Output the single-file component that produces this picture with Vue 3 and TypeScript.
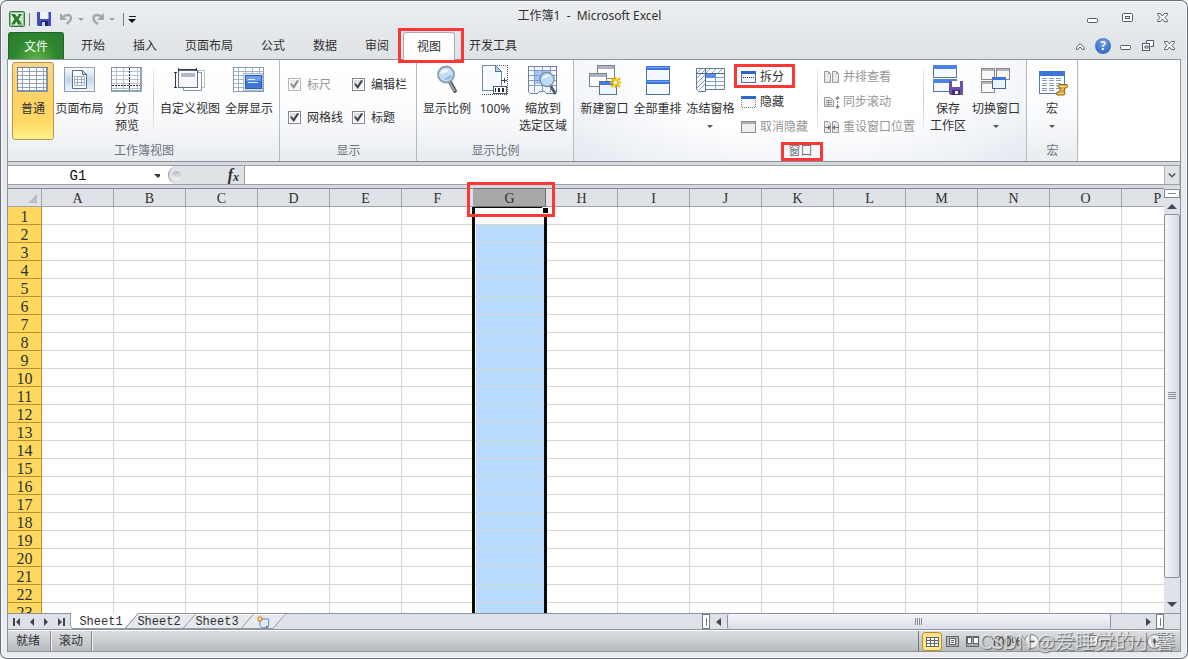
<script setup lang="ts">
import { ref } from 'vue'

const menus: string[] = ['开始', '插入', '页面布局', '公式', '数据', '审阅', '视图', '开发工具']
const activeMenu = ref('视图')

const columns: string[] = 'ABCDEFGHIJKLMNOP'.split('')
const rows: number[] = Array.from({ length: 23 }, (_, i) => i + 1)
const selectedColumn = ref('G')

const sheets: string[] = ['Sheet1', 'Sheet2', 'Sheet3']

interface Toggle {
  id: string
  label: string
  disabled: boolean
}
const toggles: Toggle[] = [
  { id: 'ruler', label: '标尺', disabled: true },
  { id: 'formula', label: '编辑栏', disabled: false },
  { id: 'gridlines', label: '网格线', disabled: false },
  { id: 'headings', label: '标题', disabled: false },
]

const cellName = ref('G1')
const formula = ref('')
const zoom = ref(50)
</script>

<template>
  <div class="window">
    <header class="titlebar">
      <div class="quick">
        <svg class="ic16" viewBox="0 0 16 16">
          <rect x=".5" y=".5" width="15" height="15" rx="1" fill="#fff" stroke="#2f7d3b" />
          <rect x="1.5" y="1.5" width="13" height="13" fill="#e2f1de" stroke="#8fc08f" />
          <path d="M10 4h4M10 7h4M10 10h4M10 13h4" stroke="#9fc79f" />
          <path d="M2 3h4l2 3 2-3h3L9.500 8 13 13.500H9L7.500 10.500 5.500 13.500H2L5.500 8z" fill="#2a7a31" />
        </svg>
        <i class="bar"></i>
        <button aria-label="保存" class="save">
          <svg class="ic14" viewBox="0 0 14 14">
            <path d="M0 0h14v14H1L0 13z" fill="#3f4bc0" />
            <path d="M3 0h8v7H3z" fill="#eef4ff" />
            <path d="M11 0h1v7h-1z" fill="#8e98e6" />
            <path d="M4 9h7v5H4z" fill="#1d2768" />
            <path d="M5 10h3v4H5z" fill="#cdd6ef" />
          </svg>
        </button>
        <button aria-label="撤消" class="undo">
          <svg class="ic14" viewBox="0 0 14 14">
            <path d="M3 5.500C5 2.500 11 1.500 11 6c0 3-2 4-4.500 6" fill="none" stroke="#a4a8ad" stroke-width="2.400" />
            <path d="M0 1v7h7z" fill="#a4a8ad" />
          </svg>
        </button>
        <span class="tri grey"></span>
        <button aria-label="恢复" class="redo">
          <svg class="ic14" viewBox="0 0 14 14">
            <path d="M11 6C9 2 2.500 2 2.500 6.500c0 3 2 4 4.500 5.500" fill="none" stroke="#a4a8ad" stroke-width="2.400" />
            <path d="M13 1v7H6z" fill="#a4a8ad" />
          </svg>
        </button>
        <span class="tri grey"></span>
        <i class="bar last"></i>
        <button aria-label="自定义快速访问工具栏" class="more"><i></i><span class="tri"></span></button>
      </div>
      <h1>工作簿1 &nbsp;- &nbsp;Microsoft Excel</h1>
      <div class="winbtns">
        <button aria-label="最小化">
          <svg class="ic14" viewBox="0 0 14 14"><rect x="1.500" y="7.500" width="10" height="4" rx="1" fill="#fff" stroke="#55596a" /></svg>
        </button>
        <button aria-label="最大化">
          <svg class="ic14" viewBox="0 0 14 14"><rect x="1.500" y="2.500" width="10" height="8" rx="1" fill="#fff" stroke="#55596a" /><rect x="4.500" y="5.500" width="4" height="2" fill="#fff" stroke="#55596a" /></svg>
        </button>
        <button aria-label="关闭">
          <svg class="ic14" viewBox="0 0 14 14"><path d="M1.500 2.500h3l2 2.500 2-2.500h3v1L9 6.500l2.500 3v1h-3l-2-2.500-2 2.500h-3v-1L4 6.500l-2.500-3z" fill="#fff" stroke="#55596a" /></svg>
        </button>
      </div>
    </header>

    <nav class="tabs">
      <button class="file">文件</button>
      <button
        v-for="m in menus"
        :key="m"
        class="tab"
        :class="{ active: m === activeMenu }"
        @click="activeMenu = m"
      >
        {{ m }}
        <span v-if="m === '视图'" class="mark mark-tab"></span>
      </button>
      <div class="docbtns">
        <button aria-label="折叠功能区">
          <svg class="ic14" viewBox="0 0 14 14"><path d="M3.500 8.500L7 4.500l4 4v2H9.500L7 8l-2 2.500H3.500z" fill="#fff" stroke="#55596a" /></svg>
        </button>
        <button aria-label="帮助" class="help">?</button>
        <button aria-label="最小化工作簿">
          <svg class="ic14" viewBox="0 0 14 14"><rect x="1.500" y="6.500" width="10" height="4" rx="1" fill="#fff" stroke="#55596a" /></svg>
        </button>
        <button aria-label="还原工作簿">
          <svg class="ic14" viewBox="0 0 14 14"><path d="M5.500 4.500v-3h7v6h-3" fill="#fff" stroke="#55596a" /><rect x="1.500" y="4.500" width="7" height="7" fill="#fff" stroke="#55596a" /><rect x="4" y="7" width="3" height="2" fill="none" stroke="#55596a" /></svg>
        </button>
        <button aria-label="关闭工作簿">
          <svg class="ic14" viewBox="0 0 14 14"><path d="M1.500 2.500h3l2 2.500 2-2.500h3v1L9 6.500l2.500 3v1h-3l-2-2.500-2 2.500h-3v-1L4 6.500l-2.500-3z" fill="#fff" stroke="#55596a" /></svg>
        </button>
      </div>
    </nav>

    <main class="client">
      <div class="ribbon">
        <section class="group g-views">
          <div class="tools">
            <button class="big w42 pressed">
              <svg class="ic32" viewBox="0 0 32 32" shape-rendering="crispEdges">
                <rect x=".5" y="3.500" width="30" height="24" fill="#fff" stroke="#6c83a0" />
                <path d="M1 7.500h30M1 11.500h30M1 15.500h30M1 19.500h30M1 23.500h30M5.500 4v23M12.500 4v23M19.500 4v23M26.500 4v23" stroke="#8ea2ba" />
                <path d="M30 4v24M1 27h30" stroke="#7f93ae" stroke-width="2" />
              </svg>
              <span>普通</span>
            </button>
            <button class="big w51">
              <svg class="ic32" viewBox="0 0 32 32">
                <defs><linearGradient id="pg" x2="0" y2="1"><stop stop-color="#fdfeff" /><stop offset=".5" stop-color="#c3d6ea" /><stop offset="1" stop-color="#f3f8fd" /></linearGradient></defs>
                <rect x=".5" y="3.500" width="30" height="24" fill="url(#pg)" stroke="#94a0af" />
                <path d="M8.500 6.500h10l4 4v14h-14z" fill="#fff" stroke="#566f8c" />
                <path d="M18.500 6.500v4h4z" fill="#c5d6e8" stroke="#566f8c" />
                <path d="M10.500 12.500h10v9h-10zM10.500 15.500h10M10.500 18.500h10M13.500 12.500v9M17.500 12.500v9" fill="none" stroke="#9aafc4" />
              </svg>
              <span>页面布局</span>
            </button>
            <button class="big w44">
              <svg class="ic32" viewBox="0 0 32 32" shape-rendering="crispEdges">
                <rect x=".5" y="3.500" width="30" height="24" fill="#fff" stroke="#7f91a8" />
                <path d="M1 7.500h30M1 11.500h30M1 15.500h30M1 19.500h30M1 24.500h30M5.500 4v23M12.500 4v23M26.500 4v23" stroke="#b5c2cf" />
                <path d="M18.500 4v23M1 21.500h30" stroke="#26323f" stroke-width="1" stroke-dasharray="2 1" />
                <path d="M30 4v24M1 27h30" stroke="#93a3b7" stroke-width="2" />
              </svg>
              <span>分页<br />预览</span>
            </button>
            <i class="sep"></i>
            <button class="big w66">
              <svg class="ic32" viewBox="0 0 32 32" shape-rendering="crispEdges">
                <path d="M24.500 6.500h6v17h-6z" fill="#fff" stroke="#b9c0c8" />
                <path d="M9.500 8.500h18v18h-18z" fill="#fff" stroke="#8b99a8" />
                <rect x="4.500" y="6.500" width="19" height="17" fill="#f4f7fb" stroke="#5d6f84" />
                <rect x="7" y="9" width="14" height="4" fill="#b3b9c1" />
                <path d="M4 5.500h19M4.500 4v3M22.500 4v3M1.500 8v15M0 8.500h3M0 23.500h3" stroke="#2c3b4d" fill="none" />
              </svg>
              <span>自定义视图</span>
            </button>
            <button class="big w52">
              <svg class="ic32" viewBox="0 0 32 32" shape-rendering="crispEdges">
                <rect x=".5" y="3.500" width="30" height="24" fill="#fff" stroke="#8799ae" />
                <path d="M1 7.500h30M1 11.500h30M1 15.500h30M1 19.500h30M1 23.500h30M5.500 4v23M12.500 4v23M19.500 4v23M26.500 4v23" stroke="#a3b2c4" />
                <rect x="10.500" y="9.500" width="19" height="17" fill="#dce8fa" stroke="#a6bcd8" />
                <rect x="12.500" y="11.500" width="16" height="13" fill="#3f77d9" stroke="#2b5bb5" />
                <path d="M13 12h15v5H13z" fill="#6b9bee" />
                <path d="M15 15.500h7M15 18.500h10" stroke="#e9f1ff" />
              </svg>
              <span>全屏显示</span>
            </button>
          </div>
          <h2>工作簿视图</h2>
        </section>

        <section class="group g-show">
          <div class="tools checks">
            <label v-for="t in toggles" :key="t.id" :for="t.id" :class="{ off: t.disabled }">
              <input :id="t.id" type="checkbox" checked :disabled="t.disabled" />{{ t.label }}
            </label>
          </div>
          <h2>显示</h2>
        </section>

        <section class="group g-zoom">
          <div class="tools">
            <button class="big w56">
              <svg class="ic32" viewBox="0 0 32 32">
                <path d="M19 18l5 9" stroke="#5c6169" stroke-width="4" stroke-linecap="round" />
                <path d="M18.500 18l5 9" stroke="#b1b6bd" stroke-width="1.500" />
                <circle cx="15" cy="10.500" r="8" fill="#c6dcf4" stroke="#8b9bad" stroke-width="1.800" />
                <path d="M9 10c1-4 4-5.500 9-4.500-2 4-5 3-9 4.500z" fill="#fff" opacity=".8" />
                <path d="M12 15c4 0 5-4 9-4-1 4-4 6-9 4z" fill="#8fb8ea" />
              </svg>
              <span>显示比例</span>
            </button>
            <button class="big w40">
              <svg class="ic32" viewBox="0 0 32 32" shape-rendering="crispEdges">
                <path d="M3.500 1.500h13l6 6v19h-19z" fill="#f7fbff" stroke="#6d8bad" />
                <path d="M16.500 1.500v6h6z" fill="#b7cfec" stroke="#5379a8" />
                <path d="M18 1.500h10.500v29H3" fill="none" stroke="#4c5663" stroke-dasharray="1 1" />
                <path d="M22 16.500h6M25.500 14v5" stroke="#35485e" />
                <rect x="14.500" y="22.500" width="13" height="7" fill="#fff" stroke="#4c5a6b" />
                <path d="M16.500 24v4M19.500 24.500h1v3h-1zM23.500 24.500h1v3h-1z" fill="none" stroke="#1f2b39" />
              </svg>
              <span>100%</span>
            </button>
            <button class="big w56">
              <svg class="ic32" viewBox="0 0 32 32">
                <g shape-rendering="crispEdges">
                  <path d="M1.500 2.500h28v25l-4 2h-6l-2-2h-5l-2 2h-7l-2-2z" fill="#f5f9ff" stroke="#6b82a0" />
                  <path d="M8 6h15v14H8z" fill="#a3c3fb" />
                  <path d="M2 6.500h27M2 11.500h27M2 16.500h27M2 21.500h27M7.500 3v25M15.500 3v25M23.500 3v25" stroke="#829cc0" />
                </g>
                <path d="M23 21l5 8" stroke="#5c6169" stroke-width="3" stroke-linecap="round" />
                <circle cx="20" cy="15.500" r="7" fill="#bfdbfa" stroke="#8292a6" stroke-width="1.500" />
                <path d="M15 15c1-3 4-5 8-4-2 3-5 2-8 4z" fill="#fff" opacity=".8" />
              </svg>
              <span>缩放到<br />选定区域</span>
            </button>
          </div>
          <h2>显示比例</h2>
        </section>

        <section class="group g-window">
          <div class="tools">
            <button class="big w53">
              <svg class="ic32" viewBox="0 0 32 32">
                <rect x="8.500" y="1.500" width="17" height="13" fill="#fff" stroke="#7c8592" />
                <rect x="9" y="2" width="16" height="3" fill="#a9b3c3" />
                <rect x=".5" y="9.500" width="17" height="13" fill="#fff" stroke="#7c8592" />
                <rect x="1" y="10" width="16" height="3" fill="#a9b3c3" />
                <rect x="10.500" y="17.500" width="17" height="13" fill="#eef4fd" stroke="#5b7191" />
                <rect x="11" y="18" width="16" height="3" fill="#3f7ae8" />
                <path d="M26.500 13v11M21 18.500h11M22 14l9 9M31 14l-9 9" stroke="#e9b800" stroke-width="2" />
                <circle cx="26.500" cy="18.500" r="2" fill="#fffbd0" />
              </svg>
              <span>新建窗口</span>
            </button>
            <button class="big w53">
              <svg class="ic32" viewBox="0 0 32 32" shape-rendering="crispEdges">
                <rect x="4.500" y="2.500" width="23" height="14" fill="#f4f9ff" stroke="#4d6f9e" />
                <rect x="4" y="2" width="24" height="4" fill="#3c74dd" />
                <rect x="4.500" y="16.500" width="23" height="14" fill="#f4f9ff" stroke="#4d6f9e" />
                <rect x="4" y="16" width="24" height="4" fill="#3c74dd" />
                <path d="M5 3.500h22M5 17.500h22" stroke="#79a5f5" />
              </svg>
              <span>全部重排</span>
            </button>
            <button class="big w53">
              <svg class="ic32" viewBox="0 0 32 32">
                <path d="M1.500 4.500h28v21h-19v2h-7l-2-2z" fill="#f8fbff" stroke="#657b96" />
                <path d="M2 9l4-4M2 14l9-9M2 19l8-8M2 24l8-8M4 26l6-6M11 9l4-4M17 9l4-4M23 9l4-4" stroke="#8ca3c2" />
                <path d="M1 9.500h29M10.500 4v22" stroke="#526a89" />
                <path d="M11 13.500h19M11 17.500h19M11 21.500h19M20.500 10v15" stroke="#8da1b9" />
                <rect x="11" y="10" width="10" height="4" fill="#5b8cec" />
              </svg>
              <span>冻结窗格<br /><i class="tri small"></i></span>
            </button>
            <div class="stack s1">
              <button>
                <svg class="ic16" viewBox="0 0 16 16" shape-rendering="crispEdges"><rect x=".5" y="2.500" width="14" height="11" fill="#f4f8fd" stroke="#55749c" /><rect x="0" y="2" width="15" height="3" fill="#2f66cc" /><path d="M2 8.500h12" stroke="#1d2a3a" stroke-dasharray="1 1" /></svg>
                拆分<span class="mark mark-split"></span>
              </button>
              <button>
                <svg class="ic16" viewBox="0 0 16 16" shape-rendering="crispEdges"><path d="M.5 4v9.500h14V4" fill="#f9fafc" stroke="#67788c" stroke-dasharray="1 1" /><rect x="0" y="2" width="15" height="3" fill="#2f66cc" /></svg>
                隐藏
              </button>
              <button class="off">
                <svg class="ic16" viewBox="0 0 16 16" shape-rendering="crispEdges"><rect x=".5" y="2.500" width="14" height="11" fill="#f1f1f3" stroke="#8b8b8f" /><rect x="1" y="3" width="13" height="2" fill="#b0b0b4" /></svg>
                取消隐藏
              </button>
            </div>
            <i class="sep"></i>
            <div class="stack s2">
              <button class="off">
                <svg class="ic16" viewBox="0 0 16 16"><path d="M.5 2.500h4l2 2v9h-6zM8.500 2.500h4l2 2v9h-6z" fill="#e8e8ea" stroke="#9a9a9e" /><path d="M4.500 2.500v2h2M12.500 2.500v2h2" fill="none" stroke="#9a9a9e" /></svg>
                并排查看
              </button>
              <button class="off">
                <svg class="ic16" viewBox="0 0 16 16"><path d="M.5 3.500h6l3 3v6h-9z" fill="#e8e8ea" stroke="#9a9a9e" /><path d="M2 6.500h6M2 8.500h6M2 10.500h6M4.500 6v6" stroke="#9a9a9e" /><path d="M13.500 4v9" stroke="#88888c" stroke-dasharray="2 1" /><path d="M11 5l2.500-3L16 5zM11 12l2.500 3 2.500-3z" fill="#88888c" /></svg>
                同步滚动
              </button>
              <button class="off">
                <svg class="ic16" viewBox="0 0 16 16"><path d="M.5 2.500h4l2 2v9h-6zM8.500 2.500h4l2 2v9h-6z" fill="#e8e8ea" stroke="#9a9a9e" /><path d="M1 8.500h4M10 8.500h5" stroke="#77777b" /><path d="M4 6l3 2.500L4 11zM11 6L8 8.500 11 11z" fill="#77777b" /></svg>
                重设窗口位置
              </button>
            </div>
            <i class="sep tight"></i>
            <button class="big w48">
              <svg class="ic32" viewBox="0 0 32 32" shape-rendering="crispEdges">
                <rect x="1.500" y="1.500" width="23" height="12" fill="#f4f9ff" stroke="#5d7596" />
                <rect x="1" y="1" width="24" height="4" fill="#4b83ea" />
                <rect x="1.500" y="15.500" width="23" height="12" fill="#f4f9ff" stroke="#5d7596" />
                <rect x="1" y="15" width="24" height="4" fill="#4b83ea" />
                <path d="M17 17h14v14H18l-1-1z" fill="#6c50a8" />
                <path d="M20 17h8v6h-8z" fill="#fff" /><path d="M20 26h8v5h-8z" fill="#44307a" /><path d="M23 27h3v3h-3z" fill="#fff" />
              </svg>
              <span>保存<br />工作区</span>
            </button>
            <button class="big w48">
              <svg class="ic32" viewBox="0 0 32 32" shape-rendering="crispEdges">
                <path d="M1.500 4.500h13v11h-13zM16.500 4.500h13v11h-13zM1.500 17.500h13v11h-13z" fill="#f7f7f8" stroke="#86888c" />
                <path d="M2 6h12M17 6h12M2 19h12" stroke="#b4b6ba" stroke-width="2" />
                <rect x="12.500" y="13.500" width="13" height="11" fill="#eaf3ff" stroke="#486792" />
                <path d="M12 14.500h14" stroke="#3d75de" stroke-width="3" />
              </svg>
              <span>切换窗口<br /><i class="tri small"></i></span>
            </button>
          </div>
          <h2>窗口<span class="mark mark-win"></span></h2>
        </section>

        <section class="group g-macro">
          <div class="tools">
            <button class="big w48">
              <svg class="ic32" viewBox="0 0 32 32">
                <rect x="3.500" y="7.500" width="25" height="22" fill="#fff" stroke="#5c7ba8" />
                <rect x="3" y="7" width="26" height="5" fill="#3c74dd" />
                <path d="M6 14.500h20M6 16.500h20M6 19.500h20M6 21.500h20M6 24.500h20M6 26.500h14" stroke="#869cb9" stroke-dasharray="5 2" />
                <path d="M22 22.500c0-1.500 1-2 2-2h7c1.500 2 0 3.500-2 3.500l-1 4c2 1 1 3-.500 3H21c-1.500-1.500-.500-3 1-3h1.500l1-4z" fill="#e0b040" stroke="#8a661a" />
                <path d="M24 22.500h5M23 29.500h4" stroke="#f7dd83" />
              </svg>
              <span>宏<br /><i class="tri small"></i></span>
            </button>
          </div>
          <h2>宏</h2>
        </section>
      </div>

      <div class="formulabar">
        <input v-model="cellName" class="name" aria-label="名称框" />
        <button class="drop" aria-label="名称列表"><span class="tri"></span></button>
        <div class="fx"><i class="knob"></i><button aria-label="插入函数">f<sub>x</sub></button></div>
        <input v-model="formula" class="formula" aria-label="编辑栏" />
        <button class="expand" aria-label="展开编辑栏">
          <svg viewBox="0 0 10 8"><path d="M1 1.500l4 4 4-4" fill="none" stroke="#4d5258" stroke-width="2" /></svg>
        </button>
      </div>

      <div class="work">
        <div class="sheet">
          <table>
            <colgroup><col class="c0" /><col v-for="c in columns" :key="c" class="cn" /></colgroup>
            <thead>
              <tr>
                <th class="corner"><svg viewBox="0 0 9 9"><path d="M9 0v9H0z" fill="#b9bec4" /></svg></th>
                <th v-for="c in columns" :key="c" :class="{ picked: c === selectedColumn }" @click="selectedColumn = c">{{ c }}</th>
              </tr>
            </thead>
            <tbody>
              <tr v-for="r in rows" :key="r">
                <th>{{ r }}</th>
                <td v-for="c in columns" :key="c" :class="{ fill: c === selectedColumn && r > 1 }"></td>
              </tr>
            </tbody>
          </table>
          <div class="selection"><i></i></div>
          <span class="mark mark-col"></span>
        </div>
        <div class="vscroll">
          <i class="vsplit"></i>
          <button aria-label="向上滚动"><span class="tri up"></span></button>
          <div class="vthumb"><i></i></div>
          <button aria-label="向下滚动" class="down"><span class="tri"></span></button>
        </div>
      </div>

      <div class="bottom">
        <div class="sheets">
          <div class="navs">
            <button aria-label="第一张"><svg viewBox="0 0 8 8"><path d="M0 0h2v8H0zM7 0v8L3 4z" /></svg></button>
            <button aria-label="上一张"><svg viewBox="0 0 8 8"><path d="M6 0v8L2 4z" /></svg></button>
            <button aria-label="下一张"><svg viewBox="0 0 8 8"><path d="M2 0v8l4-4z" /></svg></button>
            <button aria-label="最后一张"><svg viewBox="0 0 8 8"><path d="M6 0h2v8H6zM1 0v8l4-4z" /></svg></button>
          </div>
          <svg class="tabshape" viewBox="0 0 224 17">
            <path d="M55 15.500L67.500 1.500H125L113 15.500zM113 15.500L125.500 1.500H183L171 15.500zM171 15.500L183.500 1.500H216L204 15.500z" fill="#e6e9ee" />
            <path d="M67 1.500h149" stroke="#fff" />
            <path d="M.5 0v13l2 2.500H203L216 .5M55 15.500L68 .5M113 15.500L126 .5M171 15.500L184 .5" fill="none" stroke="#8f99a3" />
            <path d="M1 0v13l2 2h52L68 0z" fill="#fff" />
            <path d="M55 15.500L68 .5" stroke="#8f99a3" />
          </svg>
          <button v-for="s in sheets" :key="s" class="sheettab">{{ s }}</button>
          <button class="newsheet" aria-label="插入工作表">
            <svg class="ic16" viewBox="0 0 16 16"><path d="M4.500 4.500h10v9l-2 1h-6l-2-2z" fill="#dfe9f8" stroke="#5d7faf" /><path d="M14 13l-3 1.500 1-2.500z" fill="#2f5da4" /><path d="M4.500 1v7M1 4.500h7M2 2l5 5M7 2L2 7" stroke="#d88a14" stroke-width="1.200" /><circle cx="4.500" cy="4.500" r="1.300" fill="#fff4b8" /></svg>
          </button>
        </div>
        <div class="hscroll">
          <i class="hsplit"></i>
          <button aria-label="向左滚动"><svg viewBox="0 0 8 8"><path d="M6 0v8L1 4z" /></svg></button>
          <div class="htrack"><div class="hthumb"><i></i></div></div>
          <button aria-label="向右滚动"><svg viewBox="0 0 8 8"><path d="M2 0v8l5-4z" /></svg></button>
          <i class="hsplit end"></i>
        </div>
      </div>

      <footer class="status">
        <span class="cell">就绪</span><span class="cell">滚动</span>
        <div class="right">
          <button class="view on" aria-label="普通视图"><svg viewBox="0 0 13 10" shape-rendering="crispEdges"><path d="M.5.5h12v9H.5zM0 3.500h13M0 6.500h13M4.500 0v10M8.500 0v10" fill="#fff" stroke="#62666b" /></svg></button>
          <button class="view" aria-label="页面布局视图"><svg viewBox="0 0 13 11" shape-rendering="crispEdges"><path d="M.5.5h12v10H.5z" fill="#b4b8bc" stroke="#62666b" /><path d="M3.500 2.500h6v6h-6z" fill="#fff" stroke="#62666b" /><path d="M5 4.500h3M5 6.500h3" stroke="#62666b" /></svg></button>
          <button class="view" aria-label="分页预览视图"><svg viewBox="0 0 13 11" shape-rendering="crispEdges"><path d="M.5.5h12v10H.5z" fill="#a8acb0" stroke="#62666b" /><path d="M1 1h4v6H1zM7 1h5v6H7z" fill="#fff" stroke="#62666b" /></svg></button>
          <button class="pct">100%</button>
          <button class="round" aria-label="缩小"><svg viewBox="0 0 15 15"><path d="M4 7.500h7" stroke="#4a4e53" stroke-width="2" /></svg></button>
          <input v-model="zoom" type="range" min="0" max="100" aria-label="显示比例" />
          <button class="round" aria-label="放大"><svg viewBox="0 0 15 15"><path d="M4 7.500h7M7.500 4v7" stroke="#4a4e53" stroke-width="2" /></svg></button>
        </div>
        <span class="credit">CSDN @爱睡觉的小馨</span>
      </footer>
    </main>
  </div>
</template>

<style>
body {
  background: #fff;
}
</style>

<style scoped>
.window,
.window * {
  box-sizing: border-box;
}
.window {
  height: 100vh;
  display: flex;
  flex-direction: column;
  padding-bottom: 7px;
  overflow: hidden;
  border-radius: 7px;
  background: linear-gradient(#eceef0 0, #dfe3e6 59px, #e8eaee 60px, #e9ebef 100%);
  box-shadow: inset 0 0 0 1px #686f7a, inset 0 0 0 2px #f8f9fa;
  font: 12px/17px "Noto Sans", "Noto Sans CJK SC", sans-serif;
  color: #303030;
}
button {
  font: inherit;
  color: inherit;
  border: 0;
  padding: 0;
  margin: 0;
  background: none;
}
svg {
  display: block;
  overflow: visible;
  flex: none;
}
.ic14 { width: 14px; height: 14px; }
.ic16 { width: 16px; height: 16px; }
.ic32 { width: 32px; height: 32px; }
.tri {
  display: inline-block;
  width: 0;
  height: 0;
  border: 4px solid transparent;
  border-top-color: #35383d;
  border-bottom-width: 0;
}
.tri.grey { border-width: 3px; border-bottom-width: 0; border-top-color: #9ea2a7; }
.tri.small { border-width: 3px; border-bottom-width: 0; border-top-color: #555; vertical-align: middle; }
.tri.up { border-width: 0 5px 5px; border-color: transparent transparent #454a50; }

.titlebar {
  display: grid;
  grid-template-columns: 1fr auto 1fr;
  height: 32px;
  flex: none;
  padding: 2px 18px 0 9px;
}
.titlebar h1 {
  margin: 0;
  font-size: 12px;
  font-weight: 400;
  line-height: 28px;
  white-space: nowrap;
}
.quick { display: flex; align-items: center; padding-top: 4px; }
.quick .bar { width: 1px; height: 13px; background: #777b82; margin: 0 7px 0 4px; }
.quick .save { margin-right: 9px; }
.quick .undo, .quick .redo { margin-right: 4px; }
.quick .redo { margin-left: 7px; }
.quick .bar.last { margin: 0 4px 0 8px; }
.more { display: flex; flex-direction: column; align-items: center; gap: 2px; }
.more i { width: 7px; height: 1px; background: #222; }
.more .tri { border-top-color: #111; }
.winbtns { display: flex; justify-content: flex-end; align-items: flex-start; gap: 21px; padding-top: 9px; }

.tabs { display: flex; height: 27px; flex: none; padding: 0 11px 0 8px; }
.file {
  width: 56px;
  color: #fff;
  border: 1px solid #1c682a;
  border-bottom: 0;
  border-radius: 3px 3px 0 0;
  background: radial-gradient(ellipse at 50% 110%, #62bb45 0, #2f8730 55%, #277a2b 100%);
}
.tab { position: relative; padding: 0 14px; }
.file + .tab { margin-left: 3px; }
.tab.active {
  height: 28px;
  padding: 0 13px 1px;
  border: 1px solid #a5aeb6;
  border-bottom: 0;
  border-radius: 3px 3px 0 0;
  background: #fff;
  z-index: 1;
}
.docbtns { display: flex; align-items: center; gap: 8px; margin-left: auto; }
.docbtns .help {
  width: 16px;
  height: 16px;
  border-radius: 50%;
  background: radial-gradient(circle at 50% 30%, #6b9ce4, #2d5db5);
  color: #fff;
  font-weight: 700;
  line-height: 16px;
}
.mark { position: absolute; border: 3px solid #ff3636; z-index: 5; pointer-events: none; }
.mark-tab { left: -6px; right: -10px; top: -5px; bottom: -3px; }
.mark-split { left: -7px; width: 61px; height: 24px; top: 0; }
.mark-win { left: -7px; right: -10px; top: 0; bottom: 0; }
.mark-col { left: 459px; top: -6px; width: 88px; height: 35px; }

.client {
  flex: 1;
  min-height: 0;
  margin: 0 7px;
  display: flex;
  flex-direction: column;
  border: 1px solid #8d939c;
  background: #d5dadf;
}
.ribbon {
  display: flex;
  flex: none;
  height: 102px;
  background: #fff;
  border-bottom: 1px solid #8a9098;
}
.group {
  display: flex;
  flex-direction: column;
  flex: none;
  border-right: 1px solid #b5bac0;
  box-shadow: 1px 0 #f6f7f9;
  background: linear-gradient(#fff 0, #fbfcfd 50%, #e9ecf0 100%);
}
.g-views { width: 272px; }
.g-show { width: 137px; }
.g-zoom { width: 157px; }
.g-window { width: 453px; background: radial-gradient(ellipse at 50% 0, #fff 0, #fff 50%, #dfe5ee 110%); }
.g-macro { width: 51px; }
.tools { display: flex; flex: 1; padding: 2px 0 0 4px; }
.g-zoom .tools { padding-left: 2px; }
.g-macro .tools { padding-left: 1px; }
.group h2 {
  position: relative;
  align-self: center;
  margin: 0 0 0 1px;
  font-size: 12px;
  line-height: 18px;
  padding-bottom: 1px;
  font-weight: 400;
  color: #6a7280;
}
.big {
  display: flex;
  flex-direction: column;
  align-items: center;
  height: 78px;
  padding-top: 2px;
  white-space: nowrap;
}
.big span { margin-top: 4px; line-height: 17px; }
.w40 { width: 40px; }
.w42 { width: 42px; }
.w44 { width: 44px; }
.w48 { width: 48px; }
.w51 { width: 51px; }
.w52 { width: 52px; }
.w53 { width: 53px; }
.w56 { width: 56px; }
.w66 { width: 66px; }
.big.pressed {
  padding-top: 1px;
  border: 1px solid #c2923c;
  border-radius: 3px;
  background: linear-gradient(#f9d68c, #fed366 45%, #ffdb66 80%, #fff28e);
}
.sep { width: 1px; height: 62px; margin: 6px 3px 0 4px; background: linear-gradient(#eef0f2, #c4c8cd 50%, #eef0f2); }
.sep.tight { margin-right: 0; }
.checks { display: grid; grid-template-columns: 64px 1fr; grid-auto-rows: 33px; padding: 8px 0 0 8px; }
.checks label { display: flex; align-items: center; gap: 6px; white-space: nowrap; }
.off { color: #969696; }
.checks input {
  appearance: none;
  display: grid;
  place-items: center;
  width: 13px;
  height: 13px;
  margin: 0;
  border: 1px solid #84878b;
  background: linear-gradient(135deg, #cfd2d6, #fff);
  box-shadow: inset 0 0 0 1px #fff;
}
.checks input:checked::after {
  content: "";
  width: 9px;
  height: 9px;
  background: #3c4148;
  clip-path: polygon(0 45%, 18% 35%, 38% 62%, 80% 0, 100% 8%, 42% 100%);
}
.off input { opacity: 0.6; }
.stack { display: grid; grid-auto-rows: 25px; align-content: start; padding-top: 2px; }
.stack button { position: relative; display: flex; align-items: center; gap: 3px; white-space: nowrap; text-align: left; }
.s1 { width: 76px; padding-left: 4px; }
.s2 { width: 98px; padding-left: 3px; }

.formulabar { display: flex; flex: none; height: 20px; margin: 3px 0; border: solid #9aa0a8; border-width: 1px 0; background: #dfe3e8; }
.formulabar input { border: 0; padding: 0; margin: 0; outline: 0; background: #fff; color: #111; }
.formulabar .name { width: 140px; padding-top: 2px; text-align: center; font: 14px/16px "Liberation Mono", monospace; }
.drop { width: 20px; background: #fff; }
.drop .tri { display: block; margin: 1px auto 0; }
.fx { display: flex; align-items: center; width: 77px; padding: 0 5px 0 3px; justify-content: space-between; border-right: 1px solid #9aa0a8; border-left: 1px solid #9aa0a8; border-radius: 9px 0 0 9px; box-shadow: -8px 0 #fff; }
.knob { width: 9px; height: 9px; border-radius: 50%; background: linear-gradient(#b4b9bf, #f6f7f8); }
.fx button { font: italic 700 16px/16px "Liberation Serif", serif; }
.fx sub { font-size: 12px; line-height: 0; vertical-align: -1px; }
.formulabar .formula { flex: 1; min-width: 0; }
.expand { width: 16px; border: 1px solid #a9b2bb; border-width: 0 1px; }
.expand svg { width: 8px; height: 7px; margin: auto; }

.work { display: flex; flex: 1; min-height: 0; }
.sheet { position: relative; flex: 1; min-width: 0; background: #fff; clip-path: inset(-8px 0 0 0); }
table { table-layout: fixed; width: 1186px; border-collapse: separate; border-spacing: 0; }
.c0 { width: 34px; }
.cn { width: 72px; }
th, td { padding: 0; height: 18px; border: solid #d4d6d8; border-width: 0 1px 1px 0; }
th { font: 16px/15px "Liberation Serif", serif; text-align: center; }
thead th { height: 19px; padding-top: 3px; line-height: 14px; background: #dfe2e7; border-color: #9fa5ac; border-top: 1px solid #868c94; font-size: 14px; }
tbody th { background: #ffd95f; border-color: #c08b34; padding-top: 2px; }
thead .corner { padding: 0 4px 3px 0; vertical-align: bottom; }
.corner svg { width: 9px; height: 9px; margin-left: auto; }
thead .picked { background: #a8a8a8; border-color: #6d6d6d; }
td.fill { background: linear-gradient(#b7daff, #b7daff) center / calc(100% - 3px) 100% no-repeat; }
.selection { position: absolute; left: 464px; top: 19px; bottom: 0; width: 75px; border: solid #0a0a0a; border-width: 1px 3px 0; }
.selection i { position: absolute; right: -4px; top: 0; width: 5px; height: 5px; background: #000; box-shadow: 0 0 0 1px #fff; }

.vscroll { width: 16px; flex: none; display: flex; flex-direction: column; background: #dfe3e9; }
.vsplit { height: 9px; margin: 1px 0; border: 1px solid #868c94; background: linear-gradient(#868c94, #868c94) center / 8px 1px no-repeat #fff; }
.vscroll button { height: 15px; line-height: 0; }
.vthumb { flex: 1; display: grid; place-items: center; border: 1px solid #8791a0; border-radius: 2px; background: linear-gradient(90deg, #f6f7fa, #d5d9e2); }
.vthumb i { width: 8px; height: 8px; background: repeating-linear-gradient(#8a8f98 0 1px, transparent 1px 2px); }
.vscroll .down { height: 35px; padding-top: 18px; }
.down .tri { border-width: 5px 5px 0; border-top-color: #454a50; }

.bottom { display: flex; flex: none; height: 17px; border-top: 1px solid #8d949c; border-bottom: 1px solid #8d949c; background: #dde1e8; }
.sheets { position: relative; display: flex; flex: 1; min-width: 0; }
.navs { display: flex; width: 63px; padding: 0 3px 0 2px; }
.navs button { flex: 1; }
.bottom button svg:not(.ic16) { width: 8px; height: 8px; margin: auto; fill: #3f454c; }
.tabshape { position: absolute; left: 62px; top: -1px; width: 224px; height: 17px; }
.sheettab { position: relative; width: 58px; padding-left: 2px; font: 12px/16px "Liberation Mono", monospace; }
.newsheet { position: relative; margin-left: 10px; }
.newsheet svg { width: 16px; height: 14px; }
.hscroll { display: flex; width: 478px; padding-right: 16px; }
.hsplit { width: 8px; border: 1px solid #777d86; background: linear-gradient(#777d86, #777d86) center / 1px 8px no-repeat #fff; }
.hscroll button { width: 17px; }
.htrack { flex: 1; display: flex; }
.hthumb { flex: 1; margin-right: 28px; display: grid; place-items: center; border: 1px solid #8791a0; border-width: 0 1px; border-radius: 2px; background: linear-gradient(#f4f5f9, #d9dde5); }
.hthumb i { width: 8px; height: 7px; background: repeating-linear-gradient(90deg, #8a8f98 0 1px, transparent 1px 2px); }

.status { position: relative; display: flex; flex: none; height: 21px; border-top: 1px solid #fff; background: linear-gradient(#dcdfe2, #b7bbbf); }
.status .cell { padding: 0 10px 0 8px; line-height: 20px; border-right: 1px solid #85898e; box-shadow: 1px 0 #eef0f1; }
.status .cell + .cell { padding: 0 8px; }
.right { display: flex; align-items: center; margin-left: auto; padding: 0 18px 0 3px; border-left: 1px solid #74787d; }
.view { display: grid; place-items: center; width: 20px; height: 19px; border-radius: 3px; }
.view svg { width: 13px; height: 11px; }
.view.on { border: 1px solid #c08b34; background: linear-gradient(#ffe08a, #ffee80); }
.pct { width: 36px; margin-left: 6px; }
.round { display: grid; place-items: center; width: 15px; height: 15px; border-radius: 50%; border: 1px solid #777c82; background: #f0f1f3; }
.round svg { width: 13px; height: 13px; }
input[type="range"] { appearance: none; width: 108px; height: 12px; margin: 0; background: linear-gradient(#777b80, #777b80) center / 100% 1px no-repeat; }
input[type="range"]::-webkit-slider-thumb { appearance: none; width: 9px; height: 12px; border: 1px solid #777b80; border-radius: 1px 1px 4px 4px; background: #f2f3f5; }
.credit {
  position: absolute;
  right: 5px;
  top: -2px;
  font: 20px/24px "Noto Sans CJK SC", sans-serif;
  color: rgba(238, 239, 240, 0.75);
  text-shadow: 1px 1px 1px rgba(70, 72, 76, 0.75);
  white-space: nowrap;
  pointer-events: none;
}
</style>
